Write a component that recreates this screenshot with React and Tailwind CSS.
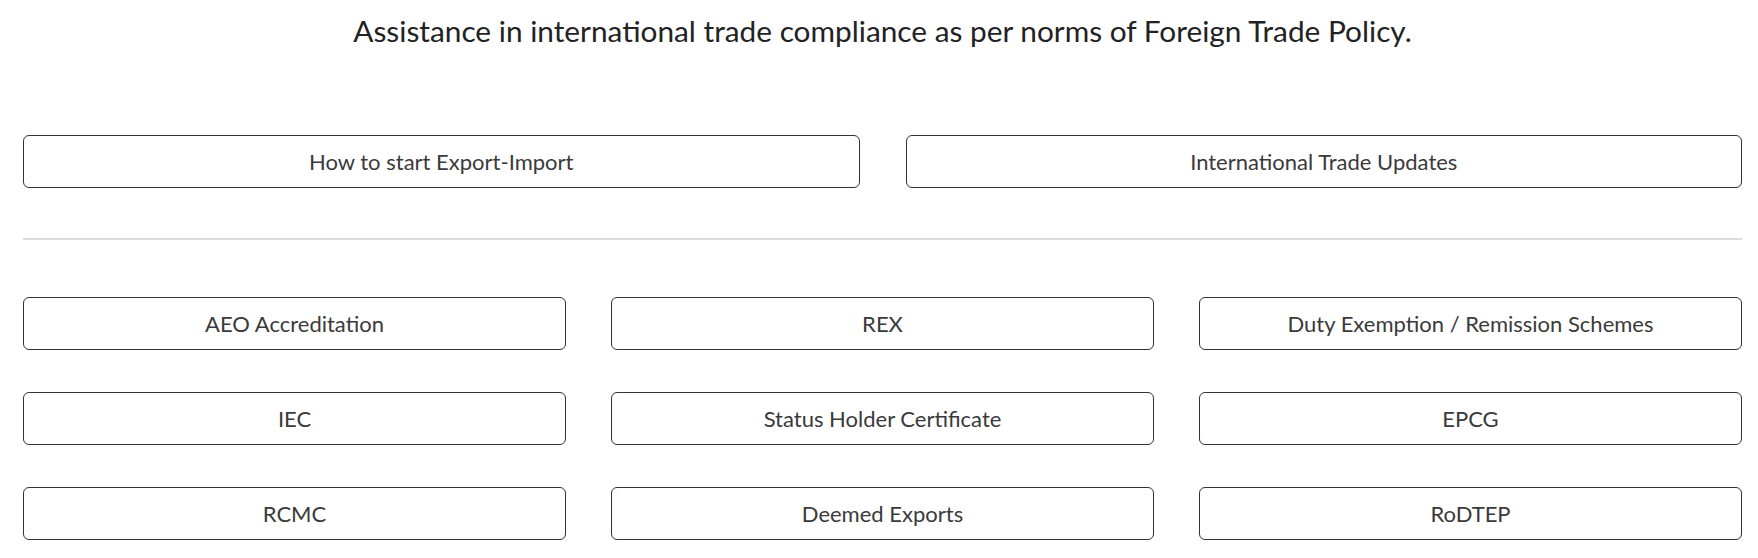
const topLinks = ['How to start Export-Import', 'International Trade Updates']

const services = [
	'AEO Accreditation',
	'REX',
	'Duty Exemption / Remission Schemes',
	'IEC',
	'Status Holder Certificate',
	'EPCG',
	'RCMC',
	'Deemed Exports',
	'RoDTEP',
]

function LinkBox({ label }) {
	return (
		<a href="#" className="flex h-[53px] items-center justify-center rounded-[6px] border border-[#333] bg-white pb-[1px] text-[22px] text-[#3a3a3a] no-underline">
			{label}
		</a>
	)
}

export default function App() {
	return (
		<div className="min-h-screen bg-white pl-[23px] pr-[16px] font-['Lato','Liberation_Sans',sans-serif]">
			<h1 className="pt-[13px] text-center text-[29.8px] font-normal leading-[36px] text-[#222]">
				Assistance in international trade compliance as per norms of Foreign Trade Policy.
			</h1>

			<div className="mt-[86px] grid grid-cols-2 gap-[46px]">
				{topLinks.map((label) => (
					<LinkBox key={label} label={label} />
				))}
			</div>

			<div className="mt-[50px] h-[2px] bg-[#dcdcdc]" />

			<div className="mt-[57px] grid grid-cols-3 gap-x-[45px] gap-y-[42px]">
				{services.map((label) => (
					<LinkBox key={label} label={label} />
				))}
			</div>
		</div>
	)
}
